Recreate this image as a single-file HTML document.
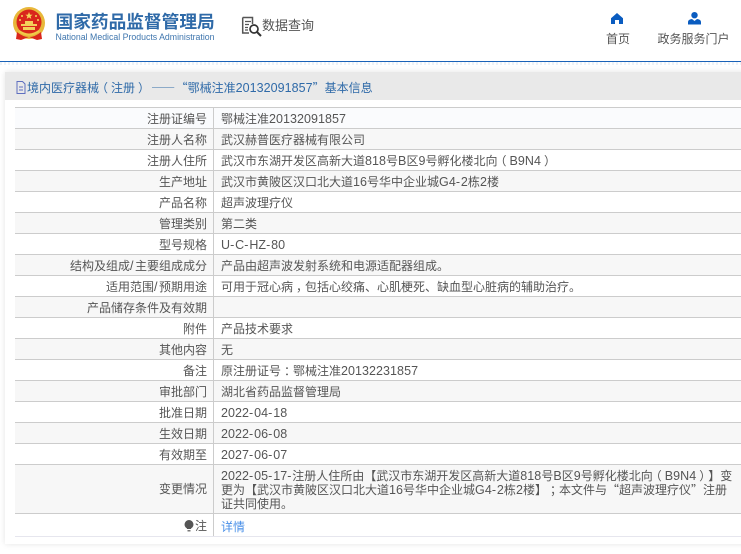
<!DOCTYPE html>
<html lang="zh-CN"><head><meta charset="utf-8">
<style>
html,body{margin:0;padding:0;background:#fff;}
body{width:741px;height:554px;overflow:hidden;position:relative;font-family:"Noto Sans CJK SC","Liberation Sans",sans-serif;color:#555;text-spacing-trim:space-all;}
.a{position:absolute;white-space:nowrap;}
.hl{position:absolute;left:0;top:61px;width:741px;height:1px;background:#1a62b8;}
.hd{position:absolute;left:0;top:62px;width:741px;height:3px;background:repeating-linear-gradient(90deg,#eef3f8 0 2px,#fff 2px 4px);}
.panel{position:absolute;left:5px;top:72px;width:760px;height:472px;background:#fff;box-shadow:0 0 6px rgba(0,0,0,.11);}
.band{position:absolute;left:5px;top:72px;width:736px;height:28px;background:#e9e9e9;}
.t{position:absolute;left:15px;top:107px;width:726px;}
.r{position:relative;height:20px;border-top:1px solid #ccc;font-size:12px;line-height:20px;}
.r.g{background:#f7f7f7;}
.l{position:absolute;left:0;top:1px;width:192px;text-align:right;color:#555;white-space:nowrap;}
.s{position:absolute;left:198px;top:0;width:1px;height:100%;background:#ccc;}
.v{position:absolute;left:206px;top:1px;white-space:nowrap;color:#555;}
i{font-style:normal;font-family:"Liberation Sans",sans-serif;font-size:12.5px;letter-spacing:.05px;}
i.h{letter-spacing:.9px;}
i.sl{letter-spacing:1.5px;}
b{font-weight:400;position:relative;}
b.m{left:-3px;}
b.n{left:3px;}
</style></head><body>
<svg class="a" style="left:12px;top:6px" width="34" height="36" viewBox="0 0 34 36">
<circle cx="17" cy="17" r="16" fill="#e8b83a"/><circle cx="17" cy="16" r="12.5" fill="#d9261c"/>
<path d="M5 26 Q17 36 29 26 L30 33 L25 34 L17 31 L9 34 L4 33Z" fill="#d9261c"/>
<path d="M7 25 Q17 32 27 25" stroke="#f0c94a" stroke-width="2" fill="none"/>
<rect x="9" y="18" width="16" height="2" fill="#f3cf5a"/><rect x="11" y="21" width="12" height="3" fill="#f3cf5a"/><rect x="13" y="15" width="8" height="3" fill="#f3cf5a"/>
<path d="M17 6l1 2.6 2.6.1-2 1.6.7 2.6-2.3-1.5-2.3 1.5.7-2.6-2-1.6 2.6-.1z" fill="#f6d65a"/>
<circle cx="10" cy="10" r="1" fill="#f6d65a"/><circle cx="24" cy="10" r="1" fill="#f6d65a"/><circle cx="8" cy="14" r="1" fill="#f6d65a"/><circle cx="26" cy="14" r="1" fill="#f6d65a"/>
</svg>
<div class="a" style="left:55.500px;top:9px;font-size:17.700px;line-height:24px;font-weight:700;color:#2f6aa8;">国家药品监督管理局</div>
<div class="a" style="left:55.500px;top:31px;font-family:'Liberation Sans',sans-serif;font-size:8.750px;line-height:12px;color:#3f76ae;">National Medical Products Administration</div>
<svg class="a" style="left:241px;top:16px" width="22" height="22" viewBox="0 0 22 22" fill="none" stroke="#555">
<path d="M1.700 1.500H11.500V8M1.700 1.500V17H8" stroke-width="1.500"/><path d="M4 5.500H10M4 8.500H8M4 11.500H7M4 14H7" stroke-width="1.200"/>
<circle cx="13" cy="13" r="4" stroke="#333" stroke-width="1.700"/><path d="M16 16L20 20" stroke="#333" stroke-width="2"/>
</svg>
<div class="a" style="left:262px;top:14px;font-size:13px;line-height:22px;color:#555;">数据查询</div>
<svg class="a" style="left:611px;top:13px" width="12" height="11" viewBox="0 0 12 11"><path d="M6 0L12 5.200V11H8V7H4V11H0V5.200Z" fill="#0a5cc0"/></svg>
<div class="a" style="left:606px;top:29px;font-size:12px;line-height:20px;color:#555;">首页</div>
<svg class="a" style="left:688px;top:12px" width="13" height="13" viewBox="0 0 13 13"><circle cx="6.500" cy="3.200" r="3.200" fill="#0a5cc0"/><path d="M0 12.500V10Q0 7.500 4 7L6.500 9L9 7Q13 7.500 13 10V12.500Z" fill="#0a5cc0"/></svg>
<div class="a" style="left:657.500px;top:29px;font-size:12px;line-height:20px;color:#555;">政务服务门户</div>
<div class="hl"></div><div class="hd"></div>
<div class="panel"></div><div class="band"></div>
<svg class="a" style="left:16px;top:81px" width="10" height="13" viewBox="0 0 10 13" fill="none" stroke="#5f6fc0" stroke-width="1"><path d="M1 .5H6.500L9 3V12.500H1Z"/><path d="M3 6H7M3 9H7"/></svg>
<div class="a" style="left:27px;top:77.500px;font-size:12px;line-height:20px;color:#2f6aa8;">境内医疗器械<b class="m">（</b>注册<b class="n">）</b><span style="margin-left:4px;letter-spacing:.5px;">——</span>“鄂械注准<i>20132091857</i>”基本信息</div>
<div class="t">
<div class="r" style="background:#fafbfd;"><div class="l">注册证编号</div><div class="s"></div><div class="v">鄂械注准<i>20132091857</i></div></div>
<div class="r g"><div class="l">注册人名称</div><div class="s"></div><div class="v">武汉赫普医疗器械有限公司</div></div>
<div class="r"><div class="l">注册人住所</div><div class="s"></div><div class="v">武汉市东湖开发区高新大道<i>818</i>号<i>B</i>区<i>9</i>号孵化楼北向<b class="m">（</b><i>B9N4</i><b class="n">）</b></div></div>
<div class="r g"><div class="l">生产地址</div><div class="s"></div><div class="v">武汉市黄陂区汉口北大道<i>16</i>号华中企业城<i>G4</i><i class="h">-</i><i>2</i>栋<i>2</i>楼</div></div>
<div class="r"><div class="l">产品名称</div><div class="s"></div><div class="v">超声波理疗仪</div></div>
<div class="r g"><div class="l">管理类别</div><div class="s"></div><div class="v">第二类</div></div>
<div class="r"><div class="l">型号规格</div><div class="s"></div><div class="v"><i>U</i><i class="h">-</i><i>C</i><i class="h">-</i><i>HZ</i><i class="h">-</i><i>80</i></div></div>
<div class="r g"><div class="l">结构及组成<i class="sl">/</i>主要组成成分</div><div class="s"></div><div class="v">产品由超声波发射系统和电源适配器组成。</div></div>
<div class="r"><div class="l">适用范围<i class="sl">/</i>预期用途</div><div class="s"></div><div class="v">可用于冠心病<b class="n">，</b>包括心绞痛、心肌梗死、缺血型心脏病的辅助治疗。</div></div>
<div class="r g"><div class="l">产品储存条件及有效期</div><div class="s"></div><div class="v"></div></div>
<div class="r"><div class="l">附件</div><div class="s"></div><div class="v">产品技术要求</div></div>
<div class="r g"><div class="l">其他内容</div><div class="s"></div><div class="v">无</div></div>
<div class="r"><div class="l">备注</div><div class="s"></div><div class="v">原注册证号<b class="n">：</b>鄂械注准<i>20132231857</i></div></div>
<div class="r g"><div class="l">审批部门</div><div class="s"></div><div class="v">湖北省药品监督管理局</div></div>
<div class="r"><div class="l">批准日期</div><div class="s"></div><div class="v"><i>2022</i><i class="h">-</i><i>04</i><i class="h">-</i><i>18</i></div></div>
<div class="r g"><div class="l">生效日期</div><div class="s"></div><div class="v"><i>2022</i><i class="h">-</i><i>06</i><i class="h">-</i><i>08</i></div></div>
<div class="r"><div class="l">有效期至</div><div class="s"></div><div class="v"><i>2027</i><i class="h">-</i><i>06</i><i class="h">-</i><i>07</i></div></div>
<div class="r g" style="height:48px;line-height:14px;"><div class="l" style="top:0;line-height:48px;">变更情况</div><div class="s"></div><div class="v" style="top:4px;"><i>2022</i><i class="h">-</i><i>05</i><i class="h">-</i><i>17</i><i class="h">-</i>注册人住所由【武汉市东湖开发区高新大道<i>818</i>号<i>B</i>区<i>9</i>号孵化楼北向<b class="m">（</b><i>B9N4</i><b class="n">）</b>】变<br>更为【武汉市黄陂区汉口北大道<i>16</i>号华中企业城<i>G4</i><i class="h">-</i><i>2</i>栋<i>2</i>楼】<b class="n">；</b>本文件与“超声波理疗仪”注册<br>证共同使用。</div></div>
<div class="r" style="height:22px;border-bottom:1px solid #e6e6ee;line-height:22px;"><div class="l" style="top:1px;">注</div><div class="s"></div><div class="v" style="top:2px;color:#4a90e8;">详情</div>
<svg class="a" style="left:169px;top:6px" width="10" height="12" viewBox="0 0 10 12"><path d="M5 0A4.500 4.500 0 0 1 7 8.500V9H3V8.500A4.500 4.500 0 0 1 5 0Z" fill="#555"/><rect x="3.500" y="10" width="3" height="1.500" fill="#777"/></svg></div>
</div>
</body></html>
